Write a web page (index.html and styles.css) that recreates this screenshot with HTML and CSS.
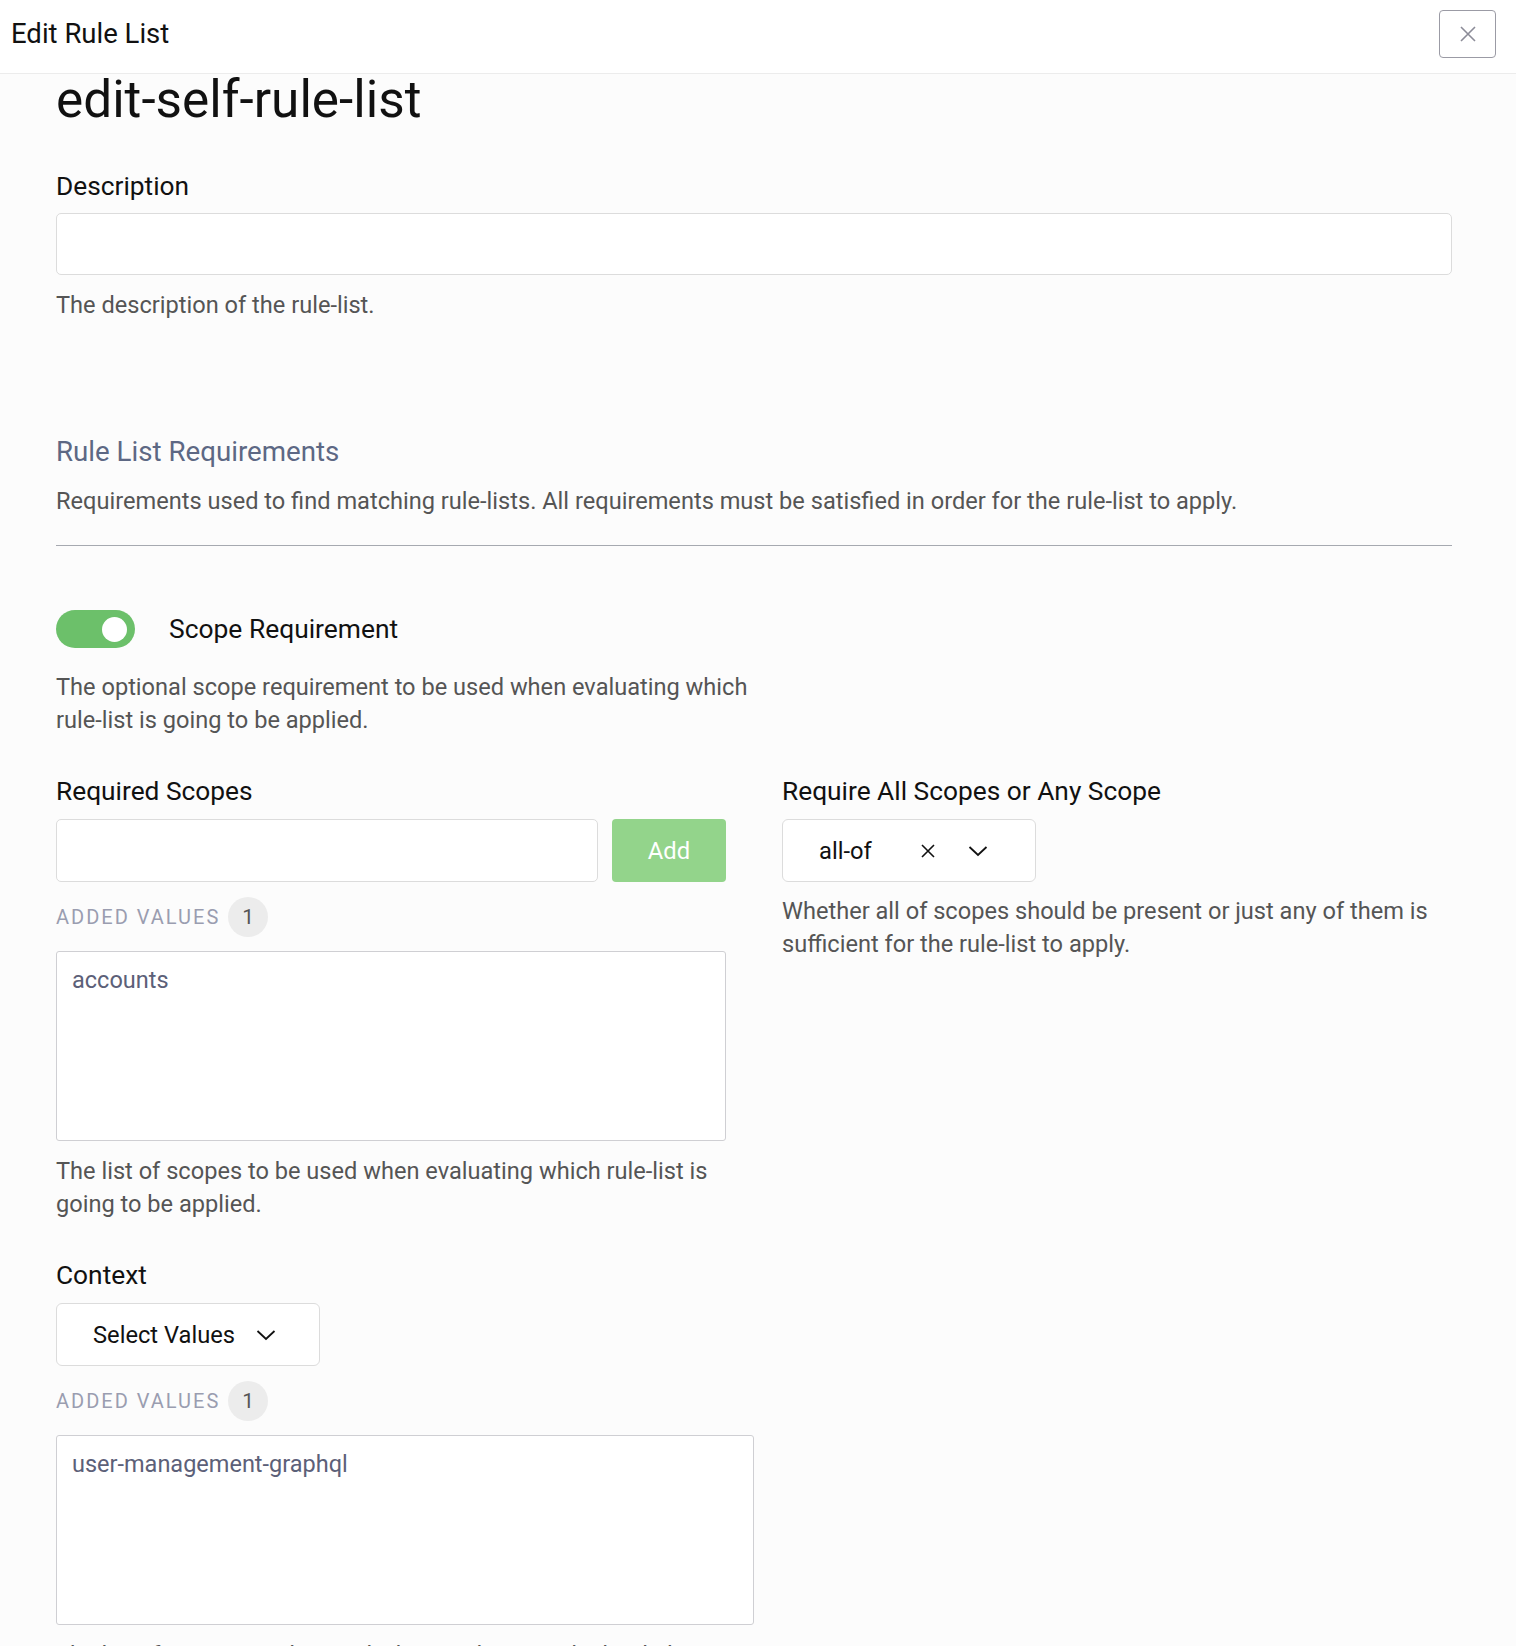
FILE: index.html
```html
<!DOCTYPE html>
<html lang="en">
<head>
    <meta charset="UTF-8">
    <meta name="viewport" content="width=device-width, initial-scale=1.0">
    <title>Edit Rule List</title>
    <link rel="stylesheet" href="styles.css">
</head>
<body>

    <header class="topbar">
        <h2 class="topbar-title">Edit Rule List</h2>
        <button class="close-btn" type="button" aria-label="Close">
            <svg width="18" height="18" viewBox="0 0 18 18" fill="none" stroke="currentColor" stroke-width="1.6">
                <path d="M2 2 L16 16 M16 2 L2 16"/>
            </svg>
        </button>
    </header>

    <main class="content">
        <h1 class="page-title">edit-self-rule-list</h1>

        <div class="field">
            <label for="description">Description</label>
            <input type="text" id="description" class="text-input wide">
            <p class="help">The description of the rule-list.</p>
        </div>

        <section class="requirements">
            <h3>Rule List Requirements</h3>
            <p class="help">Requirements used to find matching rule-lists. All requirements must be satisfied in order for the rule-list to apply.</p>
            <hr>
        </section>

        <div class="toggle-row">
            <span class="toggle on"><span class="knob"></span></span>
            <span class="toggle-label">Scope Requirement</span>
        </div>
        <p class="help half toggle-help">The optional scope requirement to be used when evaluating which rule-list is going to be applied.</p>

        <div class="two-col">
            <div class="field">
                <label for="scope">Required Scopes</label>
                <div class="add-row">
                    <input type="text" id="scope" class="text-input">
                    <button type="button" class="add-btn">Add</button>
                </div>
                <div class="added">
                    <span class="added-title">Added Values</span>
                    <span class="badge">1</span>
                </div>
                <div class="values-box">accounts</div>
                <p class="help">The list of scopes to be used when evaluating which rule-list is going to be applied.</p>
            </div>

            <div class="field">
                <label>Require All Scopes or Any Scope</label>
                <div class="select match-select">
                    <span class="select-value">all-of</span>
                    <svg class="clear-icon" width="14" height="14" viewBox="0 0 14 14" fill="none" stroke="currentColor" stroke-width="1.6">
                        <path d="M1 1 L13 13 M13 1 L1 13"/>
                    </svg>
                    <svg class="chevron" width="20" height="12" viewBox="0 0 20 12" fill="none" stroke="currentColor" stroke-width="1.8">
                        <path d="M1.5 2 L10 10 L18.5 2"/>
                    </svg>
                </div>
                <p class="help">Whether all of scopes should be present or just any of them is sufficient for the rule-list to apply.</p>
            </div>
        </div>

        <div class="field half context-field">
            <label>Context</label>
            <div class="select context-select">
                <span class="select-value">Select Values</span>
                <svg class="chevron" width="20" height="12" viewBox="0 0 20 12" fill="none" stroke="currentColor" stroke-width="1.8">
                    <path d="M1.5 2 L10 10 L18.5 2"/>
                </svg>
            </div>
            <div class="added">
                <span class="added-title">Added Values</span>
                <span class="badge">1</span>
            </div>
            <div class="values-box">user-management-graphql</div>
            <p class="help">The list of contexts to be used when evaluating which rule-list is going to be applied.</p>
        </div>
    </main>

</body>
</html>
```

FILE: styles.css
```css
body {
    font-family: Roboto, "Liberation Sans", Arial, sans-serif;
    background-color: #fcfcfc;
    color: #111;
    margin: 0;
    padding: 0;
}
.topbar {
    display: flex;
    justify-content: space-between;
    align-items: center;
    height: 73px;
    padding: 0 20px 0 11px;
    background-color: #fff;
    border-bottom: 1px solid #ececec;
}
.topbar-title {
    margin: -6px 0 0;
    font-size: 27.5px;
    line-height: 32px;
    font-weight: 400;
    color: #111;
}
.close-btn {
    width: 57px;
    height: 48px;
    margin-top: -6px;
    display: flex;
    align-items: center;
    justify-content: center;
    background: #fff;
    border: 1px solid #9b9ba5;
    border-radius: 4px;
    color: #8c8c98;
    cursor: pointer;
}
.content {
    padding: 0 64px 0 56px;
}
.page-title {
    margin: -4px 0 0;
    font-size: 51.3px;
    line-height: 60px;
    font-weight: 400;
    color: #111;
}
.field {
    display: flex;
    flex-direction: column;
}
.field label {
    font-size: 26.3px;
    line-height: 28px;
    color: #111;
    margin-bottom: 13px;
}
.page-title + .field {
    margin-top: 42px;
}
.text-input {
    height: 62px;
    box-sizing: border-box;
    border: 1px solid #dcdcdc;
    border-radius: 5px;
    background: #fff;
    font: inherit;
    padding: 0 14px;
}
.help {
    margin: 14px 0 0;
    font-size: 23.6px;
    line-height: 33px;
    color: #555;
}
.half {
    max-width: 50%;
}
.requirements {
    margin-top: 115px;
}
.requirements h3 {
    margin: 0;
    font-size: 27.7px;
    line-height: 30px;
    font-weight: 400;
    color: #5d6884;
}
.requirements .help {
    margin-top: 18px;
}
.requirements hr {
    margin: 27px 0 0;
    border: none;
    border-top: 1.5px solid #a6a9b0;
}
.toggle-row {
    display: flex;
    align-items: center;
    gap: 34px;
    margin-top: 64px;
}
.toggle {
    width: 79px;
    height: 38px;
    border-radius: 19px;
    background-color: #6cc06a;
    display: flex;
    align-items: center;
    justify-content: flex-end;
    padding-right: 8px;
    box-sizing: border-box;
}
.knob {
    width: 25px;
    height: 25px;
    border-radius: 50%;
    background-color: #fff;
}
.toggle-label {
    font-size: 26.4px;
    color: #111;
}
.toggle-help {
    margin-top: 23px;
}
.two-col {
    display: grid;
    grid-template-columns: 1fr 1fr;
    gap: 56px;
    margin-top: 40px;
}
.two-col .field label,
.context-field label {
    margin-bottom: 14px;
}
.add-row {
    display: flex;
    gap: 14px;
}
.add-row .text-input {
    flex: 1;
    height: 63px;
}
.add-btn {
    width: 114px;
    height: 63px;
    border: none;
    border-radius: 4px;
    background-color: #93d48b;
    color: #fff;
    font: inherit;
    font-size: 23.8px;
    cursor: pointer;
}
.added {
    display: flex;
    align-items: center;
    gap: 8px;
    margin-top: 15px;
}
.added-title {
    font-size: 20px;
    letter-spacing: 2px;
    text-transform: uppercase;
    color: #9a9db0;
}
.badge {
    width: 40px;
    height: 40px;
    border-radius: 50%;
    background-color: #ececec;
    color: #555;
    font-size: 21px;
    display: flex;
    align-items: center;
    justify-content: center;
}
.values-box {
    margin-top: 14px;
    height: 190px;
    box-sizing: border-box;
    padding: 14px 15px;
    border: 1px solid #cfcfd3;
    border-radius: 3px;
    background: #fff;
    font-size: 23.5px;
    color: #5c6078;
}
.values-box + .help {
    line-height: 32.5px;
}
.select {
    display: flex;
    align-items: center;
    height: 63px;
    box-sizing: border-box;
    border: 1px solid #dcdcdc;
    border-radius: 6px;
    background: #fff;
    padding-left: 36px;
    color: #111;
    font-size: 23.7px;
}
.match-select {
    width: 254px;
}
.match-select .clear-icon {
    margin-left: 49px;
}
.match-select .chevron {
    margin-left: 33px;
}
.context-select {
    width: 264px;
}
.context-select .chevron {
    margin-left: 21px;
}
.match-select + .help {
    margin-top: 13px;
}
.context-field {
    margin-top: 41px;
}
```
